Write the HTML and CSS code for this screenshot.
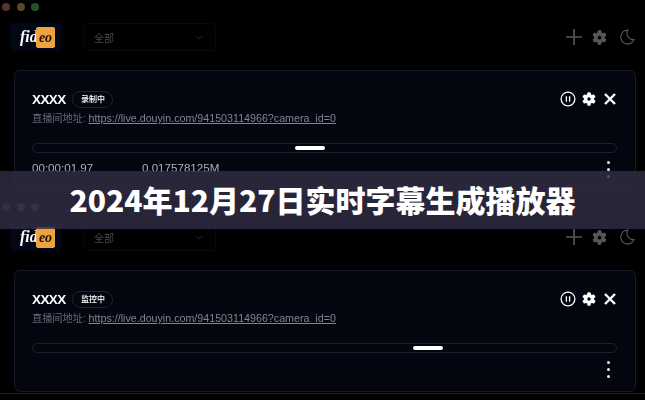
FILE: index.html
```html
<!DOCTYPE html>
<html lang="zh-CN">
<head>
<meta charset="utf-8">
<title>2024年12月27日实时字幕生成播放器</title>
<link rel="stylesheet" href="styles.css">
</head>
<body>
<svg class="defs" width="0" height="0" aria-hidden="true">
  <symbol id="gear" viewBox="-12 -12 24 24">
    <circle r="6.2" fill="none" stroke="currentColor" stroke-width="5"/>
    <g fill="currentColor">
      <rect x="-3" y="-11.5" width="6" height="23" rx="1.6"/>
      <rect x="-3" y="-11.5" width="6" height="23" rx="1.6" transform="rotate(60)"/>
      <rect x="-3" y="-11.5" width="6" height="23" rx="1.6" transform="rotate(120)"/>
    </g>
    <circle r="3" fill="var(--hole)"/>
  </symbol>
</svg>
<main class="page">
  <section class="pane">
    <div class="lights"><i class="light red"></i><i class="light amber"></i><i class="light green"></i></div>
    <header class="topbar">
      <div class="logo"><span class="fid">fid</span><span class="eo">eo</span></div>
      <div class="select"><span>全部</span><svg class="chev" viewBox="0 0 10 6"><path d="M1 1l4 4 4-4" fill="none" stroke="currentColor" stroke-width="1.2"/></svg></div>
      <div class="tools">
        <svg class="plus" viewBox="0 0 16 16"><path d="M8 0v16M0 8h16" stroke="currentColor" stroke-width="1.6"/></svg>
        <svg class="gear-top"><use href="#gear"/></svg>
        <svg class="moon" viewBox="0 0 18 18"><path d="M10 1.2a7.8 7.8 0 1 0 7 10.6A7 7 0 0 1 10 1.2z" fill="none" stroke="currentColor" stroke-width="1.3"/></svg>
      </div>
    </header>
    <article class="card">
      <div class="card-main">
        <div class="title-row">
          <b class="name">XXXX</b><span class="badge">录制中</span>
          <div class="actions">
            <svg class="pause" viewBox="0 0 16 16"><circle cx="8" cy="8" r="6.9" fill="none" stroke="currentColor" stroke-width="1.3"/><path d="M6.4 5.3v5.4M9.6 5.3v5.4" stroke="currentColor" stroke-width="1.3"/></svg>
            <svg class="gear-card"><use href="#gear"/></svg>
            <svg class="close" viewBox="0 0 12 12"><path d="M1 1l10 10M11 1L1 11" stroke="currentColor" stroke-width="2.4"/></svg>
          </div>
        </div>
        <p class="url">直播间地址: <a href="#">https://live.douyin.com/941503114966?camera_id=0</a></p>
        <div class="track"><span class="thumb thumb-a"></span></div>
        <div class="stats"><span class="time">00:00:01.97</span><span class="size">0.017578125M</span><div class="more"><i></i><i></i><i></i></div></div>
      </div>
    </article>
    <div class="edge"></div>
  </section>
  <section class="pane">
    <div class="lights"><i class="light red"></i><i class="light amber"></i><i class="light green"></i></div>
    <header class="topbar">
      <div class="logo"><span class="fid">fid</span><span class="eo">eo</span></div>
      <div class="select"><span>全部</span><svg class="chev" viewBox="0 0 10 6"><path d="M1 1l4 4 4-4" fill="none" stroke="currentColor" stroke-width="1.2"/></svg></div>
      <div class="tools">
        <svg class="plus" viewBox="0 0 16 16"><path d="M8 0v16M0 8h16" stroke="currentColor" stroke-width="1.6"/></svg>
        <svg class="gear-top"><use href="#gear"/></svg>
        <svg class="moon" viewBox="0 0 18 18"><path d="M10 1.2a7.8 7.8 0 1 0 7 10.6A7 7 0 0 1 10 1.2z" fill="none" stroke="currentColor" stroke-width="1.3"/></svg>
      </div>
    </header>
    <article class="card">
      <div class="card-main">
        <div class="title-row">
          <b class="name">XXXX</b><span class="badge">监控中</span>
          <div class="actions">
            <svg class="pause" viewBox="0 0 16 16"><circle cx="8" cy="8" r="6.9" fill="none" stroke="currentColor" stroke-width="1.3"/><path d="M6.4 5.3v5.4M9.6 5.3v5.4" stroke="currentColor" stroke-width="1.3"/></svg>
            <svg class="gear-card"><use href="#gear"/></svg>
            <svg class="close" viewBox="0 0 12 12"><path d="M1 1l10 10M11 1L1 11" stroke="currentColor" stroke-width="2.4"/></svg>
          </div>
        </div>
        <p class="url">直播间地址: <a href="#">https://live.douyin.com/941503114966?camera_id=0</a></p>
        <div class="track"><span class="thumb thumb-b"></span></div>
        <div class="stats"><div class="more"><i></i><i></i><i></i></div></div>
      </div>
    </article>
    <div class="edge"></div>
  </section>
  <div class="band"><h1>2024年12月27日实时字幕生成播放器</h1></div>
</main>
</body>
</html>
```
FILE: styles.css
```css
* { box-sizing: border-box; margin: 0; padding: 0; }
html, body { width: 645px; height: 400px; overflow: hidden; background: #000; }
body { font-family: "Liberation Sans", "Noto Sans CJK SC", sans-serif; color: #fff; }
.defs { position: absolute; }
.page { position: relative; width: 645px; height: 400px; display: flex; flex-direction: column; }
.pane { height: 200px; display: flex; flex-direction: column; background: #000; filter: blur(0.4px); }
.lights { height: 15px; display: flex; gap: 6.5px; padding-left: 2px; flex: none; }
.light { width: 8px; height: 8px; border-radius: 50%; margin-top: 3px; }
.red { background: #53342f; }
.amber { background: #5a4828; }
.green { background: #29502d; }
.topbar { height: 40px; flex: none; display: flex; align-items: center; padding-left: 10px; margin-top: 2px; }
.logo { width: 52px; height: 28px; background: #030614; display: flex; align-items: center; padding-left: 10px; }
.fid { font: italic 700 16px "Liberation Serif", serif; width: 16px; }
.eo { width: 19px; height: 21px; border-radius: 2px; background: #eda33f; color: #1d1206; font: italic 700 14px/21px "Liberation Serif", serif; text-align: center; }
.select { width: 132px; height: 28px; margin-left: 22px; border: 1px solid #08090d; border-radius: 4px; display: flex; align-items: center; justify-content: space-between; padding: 0 12px 0 9px; color: #4a4a4e; font-size: 10px; }
.chev { width: 8px; height: 5px; color: #2b2b2e; }
.tools { margin-left: auto; display: flex; align-items: center; gap: 10px; padding-right: 10px; color: #565656; --hole: #000; }
.plus { width: 16px; height: 16px; }
.gear-top { width: 15px; height: 15px; }
.moon { width: 16px; height: 16px; margin-left: 2px; }
.card { width: 622px; height: 122px; margin-left: 14px; margin-top: 13px; flex: none; border: 1px solid #141a2a; border-radius: 6px; background: #03060f; padding: 18px 18px 0 17px; }
.title-row { height: 20px; display: flex; align-items: center; }
.name { font-size: 13.5px; letter-spacing: -0.6px; width: 40px; }
.badge { width: 41px; height: 17px; border: 1px solid #1d2333; border-radius: 9px; font-size: 8px; line-height: 15px; text-align: center; font-weight: 500; padding-left: 1px; }
.actions { margin-left: auto; display: flex; align-items: center; gap: 6px; padding-right: 1px; --hole: #03060f; }
.pause { width: 16px; height: 16px; }
.gear-card { width: 14px; height: 14px; }
.close { width: 12px; height: 12px; margin-left: 2px; }
.url { margin-top: 1px; font-size: 10.2px; line-height: 16px; color: #646a78; white-space: nowrap; }
.url a { color: #7f8594; font-size: 10.7px; }
.track { position: relative; width: 585px; height: 10px; margin-top: 16px; border: 1px solid #1a2030; border-radius: 5px; }
.thumb { position: absolute; top: 2px; width: 30px; height: 4px; border-radius: 2px; background: #fff; }
.thumb-a { left: 262px; }
.thumb-b { left: 380px; }
.stats { position: relative; height: 20px; margin-top: 4px; display: flex; align-items: center; font-size: 11.6px; color: #aeb2bc; }
.time { width: 110px; }
.more { margin-left: auto; margin-right: 7px; margin-top: 4px; display: flex; flex-direction: column; gap: 4px; }
.more i { width: 3px; height: 3px; border-radius: 50%; background: #e8e8ee; }
.edge { height: 1px; margin-top: 1px; background: #1c1c22; flex: none; }
.band { position: absolute; left: 0; top: 171px; width: 645px; height: 58px; padding-bottom: 3px; background: rgba(50, 45, 68, 0.82); display: flex; align-items: center; justify-content: center; }
.band h1 { font: 900 30px/1 "Noto Sans CJK SC", sans-serif; color: #fff; white-space: nowrap; }
```
